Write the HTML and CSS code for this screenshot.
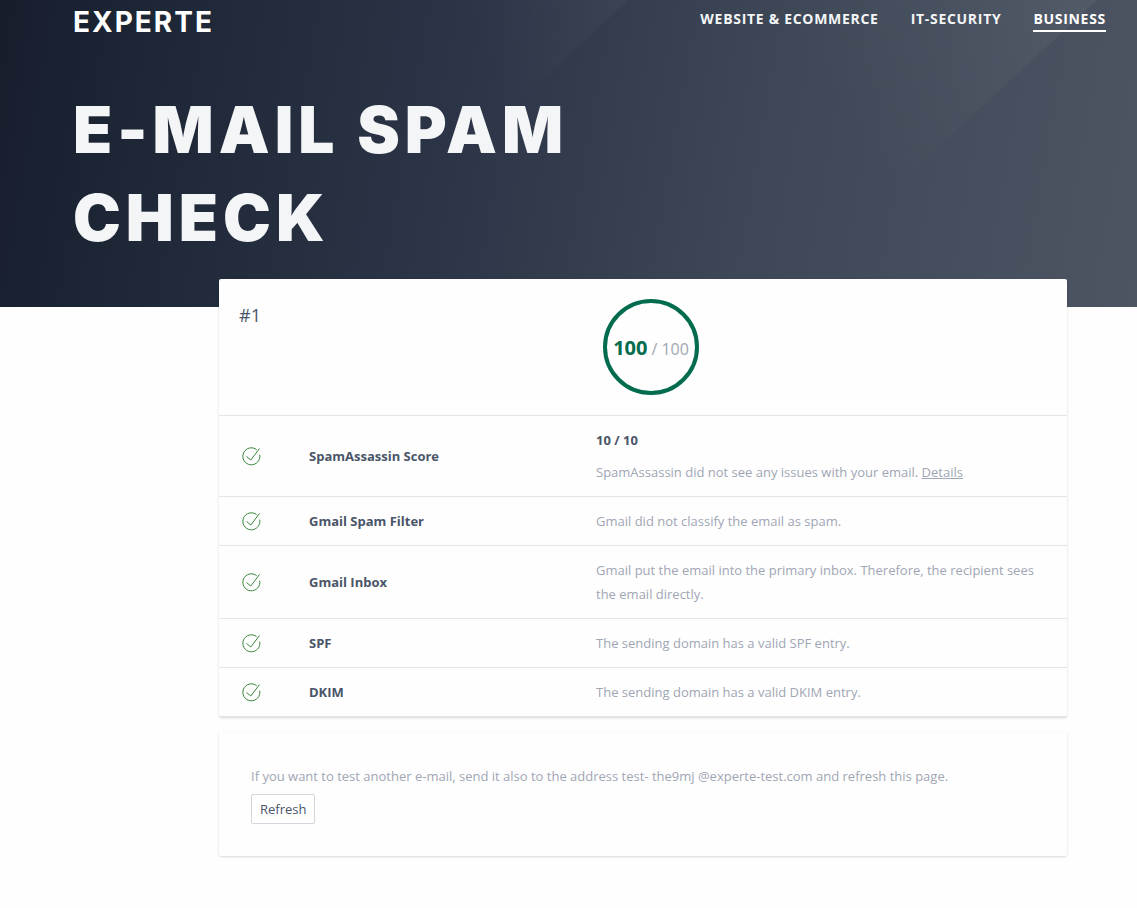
FILE: index.html
```html
<!DOCTYPE html>
<html lang="en">
<head>
<meta charset="utf-8">
<meta name="viewport" content="width=device-width, initial-scale=1">
<title>E-Mail Spam Check</title>
<link rel="stylesheet" href="styles.css">
</head>
<body>
<svg class="sprite" aria-hidden="true">
  <symbol id="check" viewBox="0 0 24 24">
    <path d="M17.700 5.700A8.500 8.500 0 1 0 20.700 10.700"/>
    <path d="M7.500 12.500l4.300 3.500 8.700-11.500"/>
  </symbol>
</svg>
<header class="hero">
  <svg class="hero-art" viewBox="0 0 1137 307" preserveAspectRatio="none" aria-hidden="true">
    <defs>
      <linearGradient id="ray-a" gradientUnits="userSpaceOnUse" x1="1097" y1="0" x2="860" y2="150">
        <stop offset="0" stop-color="#fff" stop-opacity=".05"/>
        <stop offset="1" stop-color="#fff" stop-opacity="0"/>
      </linearGradient>
      <linearGradient id="ray-b" gradientUnits="userSpaceOnUse" x1="628" y1="0" x2="480" y2="60">
        <stop offset="0" stop-color="#fff" stop-opacity=".03"/>
        <stop offset="1" stop-color="#fff" stop-opacity="0"/>
      </linearGradient>
    </defs>
    <path fill="url(#ray-a)" d="M1097 0L870 210L700 0z"/>
    <path fill="url(#ray-b)" d="M628 0L500 120L340 0z"/>
  </svg>
  <div class="topbar">
    <a class="logo" href="#">EXPERTE</a>
    <nav class="nav" aria-label="Main">
      <a href="#">WEBSITE &amp; ECOMMERCE</a>
      <a href="#">IT-SECURITY</a>
      <a class="active" href="#" aria-current="page">BUSINESS</a>
    </nav>
  </div>
  <h1 class="title">E-MAIL SPAM CHECK</h1>
</header>
<main class="content">
  <section class="card">
    <table class="results">
      <colgroup><col class="col-icon"><col class="col-name"><col></colgroup>
      <thead>
        <tr>
          <th class="number" colspan="2" scope="col">#1</th>
          <td class="score-cell"><div class="score"><strong>100</strong><span>/ 100</span></div></td>
        </tr>
      </thead>
      <tbody>
        <tr>
          <td><svg class="icon" role="img" aria-label="Passed"><use href="#check"/></svg></td>
          <th scope="row">SpamAssassin Score</th>
          <td><p class="points">10 / 10</p><p>SpamAssassin did not see any issues with your email. <a href="#">Details</a></p></td>
        </tr>
        <tr>
          <td><svg class="icon" role="img" aria-label="Passed"><use href="#check"/></svg></td>
          <th scope="row">Gmail Spam Filter</th>
          <td>Gmail did not classify the email as spam.</td>
        </tr>
        <tr>
          <td><svg class="icon" role="img" aria-label="Passed"><use href="#check"/></svg></td>
          <th scope="row">Gmail Inbox</th>
          <td>Gmail put the email into the primary inbox. Therefore, the recipient sees the email directly.</td>
        </tr>
        <tr>
          <td><svg class="icon" role="img" aria-label="Passed"><use href="#check"/></svg></td>
          <th scope="row">SPF</th>
          <td>The sending domain has a valid SPF entry.</td>
        </tr>
        <tr>
          <td><svg class="icon" role="img" aria-label="Passed"><use href="#check"/></svg></td>
          <th scope="row">DKIM</th>
          <td>The sending domain has a valid DKIM entry.</td>
        </tr>
      </tbody>
    </table>
  </section>
  <section class="card again">
    <p>If you want to test another e-mail, send it also to the address test- the9mj @experte-test.com and refresh this page.</p>
    <button class="refresh" type="button">Refresh</button>
  </section>
</main>
</body>
</html>
```
FILE: styles.css
```css
* {
  box-sizing: border-box;
}

body {
  margin: 0;
  background: #fefefe;
  color: #a0a6b4;
  font: 13px/24px "Open Sans", "Noto Sans", sans-serif;
}

p {
  margin: 0;
}

.sprite {
  position: absolute;
  width: 0;
  height: 0;
}

.hero {
  position: relative;
  padding: 0 31px 45px 73px;
  background: linear-gradient(100deg, #181d2c 0%, #1c2635 12%, #2c3547 40%, #3d4756 66%, #4d5563 100%);
}

.hero-art {
  position: absolute;
  inset: 0;
  width: 100%;
  height: 100%;
}

.topbar {
  position: relative;
  display: flex;
  justify-content: space-between;
  align-items: flex-start;
  height: 86px;
  padding-top: 8px;
}

.logo {
  color: #fff;
  font: 700 28px/28px Inter, sans-serif;
  letter-spacing: 2px;
  text-decoration: none;
}

.nav {
  display: flex;
  gap: 32px;
}

.nav a {
  border-bottom: 2px solid transparent;
  color: #f4f5f7;
  font-size: 14px;
  font-weight: 700;
  line-height: 22px;
  letter-spacing: 0.05em;
  text-decoration: none;
}

.nav .active {
  border-color: #fff;
  color: #fff;
}

.title {
  position: relative;
  max-width: 560px;
  margin: 0;
  color: #f4f5f7;
  font: 900 64px/88px "Arial Black", Inter, sans-serif;
  letter-spacing: 5px;
}

.content {
  position: relative;
  margin-top: -28px;
  padding: 0 70px 50px 219px;
}

.card {
  border-radius: 2px;
  background: #fefefe;
  box-shadow: 0 1px 3px rgba(0, 0, 0, .1), 0 1px 2px rgba(0, 0, 0, .06);
}

.results {
  width: 100%;
  border-collapse: separate;
  border-spacing: 0;
  table-layout: fixed;
  text-align: left;
}

.col-icon {
  width: 70px;
}

.col-name {
  width: 287px;
}

.results th,
.results td {
  padding: 12px 20px;
}

.results tr > * {
  border-bottom: 1px solid #e5e5e8;
}

.results tbody th {
  color: #4a5568;
  font-weight: 700;
}

.results .number {
  padding-top: 24px;
  color: #4a5568;
  font-size: 18px;
  font-weight: 500;
  vertical-align: top;
}

.results .score-cell {
  padding: 20px 27px;
}

.score {
  display: flex;
  align-items: baseline;
  justify-content: center;
  gap: 4px;
  width: 96px;
  height: 96px;
  border: 4px solid #046c4e;
  border-radius: 50%;
  font-size: 16px;
  line-height: 90px;
}

.score strong {
  color: #046c4e;
  font-size: 20px;
}

.points {
  margin-bottom: 8px;
  color: #4a5568;
  font-weight: 700;
}

.results a {
  color: inherit;
}

.icon {
  display: block;
  width: 24px;
  height: 24px;
  fill: none;
  stroke: #38863c;
  stroke-width: 1;
}

.again {
  margin-top: 15px;
  padding: 32px;
}

.refresh {
  display: block;
  margin-top: 6px;
  padding: 2px 8px;
  border: 1px solid #d2d6dc;
  border-radius: 2px;
  background: #fff;
  color: #4a5568;
  font: inherit;
  font-weight: 500;
}
```
